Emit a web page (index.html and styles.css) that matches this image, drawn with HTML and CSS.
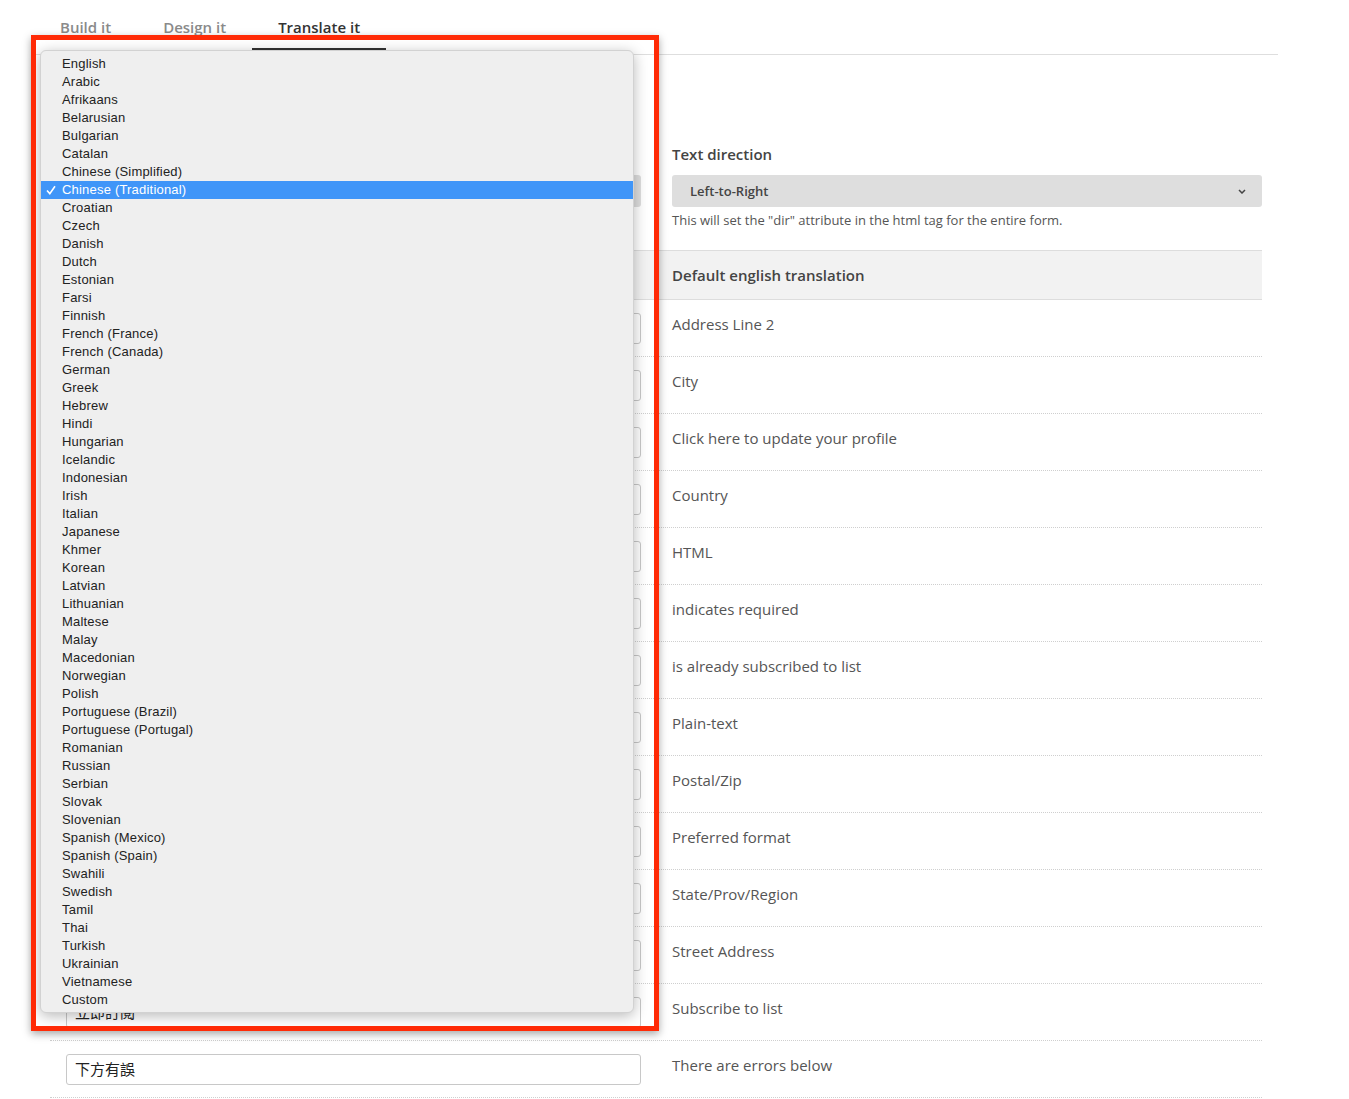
FILE: index.html
```html
<!DOCTYPE html>
<html lang="en">
<head>
<meta charset="utf-8">
<title>Translate it</title>
<link rel="stylesheet" href="styles.css">
</head>
<body>
<div class="page">
  <nav class="tabs">
    <a class="tab">Build it</a>
    <a class="tab">Design it</a>
    <a class="tab active">Translate it</a>
  </nav>

  <div class="form">
    <div class="settings">
      <div class="col col-left">
        <div class="label"></div>
        <div class="select select-left"></div>
      </div>
      <div class="col col-right">
        <div class="label">Text direction</div>
        <div class="select">
          <span>Left-to-Right</span>
          <svg class="chev" width="8" height="5" viewBox="0 0 8 5"><path d="M1 1 L4 4 L7 1" fill="none" stroke="#444" stroke-width="1.5"/></svg>
        </div>
        <div class="help">This will set the "dir" attribute in the html tag for the entire form.</div>
      </div>
    </div>

    <div class="table">
      <div class="row head">
        <div class="cell cell-left"></div>
        <div class="cell cell-right">Default english translation</div>
      </div>
      <div class="row"><div class="cell cell-left"><div class="input"></div></div><div class="cell cell-right">Address Line 2</div></div>
      <div class="row"><div class="cell cell-left"><div class="input"></div></div><div class="cell cell-right">City</div></div>
      <div class="row"><div class="cell cell-left"><div class="input"></div></div><div class="cell cell-right">Click here to update your profile</div></div>
      <div class="row"><div class="cell cell-left"><div class="input"></div></div><div class="cell cell-right">Country</div></div>
      <div class="row"><div class="cell cell-left"><div class="input"></div></div><div class="cell cell-right">HTML</div></div>
      <div class="row"><div class="cell cell-left"><div class="input"></div></div><div class="cell cell-right">indicates required</div></div>
      <div class="row"><div class="cell cell-left"><div class="input"></div></div><div class="cell cell-right">is already subscribed to list</div></div>
      <div class="row"><div class="cell cell-left"><div class="input"></div></div><div class="cell cell-right">Plain-text</div></div>
      <div class="row"><div class="cell cell-left"><div class="input"></div></div><div class="cell cell-right">Postal/Zip</div></div>
      <div class="row"><div class="cell cell-left"><div class="input"></div></div><div class="cell cell-right">Preferred format</div></div>
      <div class="row"><div class="cell cell-left"><div class="input"></div></div><div class="cell cell-right">State/Prov/Region</div></div>
      <div class="row"><div class="cell cell-left"><div class="input"></div></div><div class="cell cell-right">Street Address</div></div>
      <div class="row"><div class="cell cell-left"><div class="input">立即訂閱</div></div><div class="cell cell-right">Subscribe to list</div></div>
      <div class="row"><div class="cell cell-left"><div class="input">下方有誤</div></div><div class="cell cell-right">There are errors below</div></div>
    </div>
  </div>

  <ul class="dropdown">
    <li>English</li>
    <li>Arabic</li>
    <li>Afrikaans</li>
    <li>Belarusian</li>
    <li>Bulgarian</li>
    <li>Catalan</li>
    <li>Chinese (Simplified)</li>
    <li class="selected"><svg class="check" width="10" height="10" viewBox="0 0 10 10"><path d="M1 5.5 L3.8 8.6 L9 1.2" fill="none" stroke="#fff" stroke-width="1.6"/></svg>Chinese (Traditional)</li>
    <li>Croatian</li>
    <li>Czech</li>
    <li>Danish</li>
    <li>Dutch</li>
    <li>Estonian</li>
    <li>Farsi</li>
    <li>Finnish</li>
    <li>French (France)</li>
    <li>French (Canada)</li>
    <li>German</li>
    <li>Greek</li>
    <li>Hebrew</li>
    <li>Hindi</li>
    <li>Hungarian</li>
    <li>Icelandic</li>
    <li>Indonesian</li>
    <li>Irish</li>
    <li>Italian</li>
    <li>Japanese</li>
    <li>Khmer</li>
    <li>Korean</li>
    <li>Latvian</li>
    <li>Lithuanian</li>
    <li>Maltese</li>
    <li>Malay</li>
    <li>Macedonian</li>
    <li>Norwegian</li>
    <li>Polish</li>
    <li>Portuguese (Brazil)</li>
    <li>Portuguese (Portugal)</li>
    <li>Romanian</li>
    <li>Russian</li>
    <li>Serbian</li>
    <li>Slovak</li>
    <li>Slovenian</li>
    <li>Spanish (Mexico)</li>
    <li>Spanish (Spain)</li>
    <li>Swahili</li>
    <li>Swedish</li>
    <li>Tamil</li>
    <li>Thai</li>
    <li>Turkish</li>
    <li>Ukrainian</li>
    <li>Vietnamese</li>
    <li>Custom</li>
  </ul>

  <div class="frame"></div>
</div>
</body>
</html>
```

FILE: styles.css
```css
* { box-sizing: border-box; }

body {
  margin: 0;
  background: #fff;
  font-family: "Open Sans", "Noto Sans CJK TC", sans-serif;
  color: #444;
}

.page {
  position: relative;
  width: 1349px;
  min-height: 1099px;
}

/* Tabs */
.tabs {
  display: flex;
  margin-left: 34px;
  width: 1244px;
  padding-bottom: 3px;
  border-bottom: 1px solid #dedede;
}

.tab {
  padding: 17px 26px 11px;
  line-height: 20px;
  font-size: 15px;
  font-weight: 600;
  color: #8a8a8a;
  border-bottom: 3px solid transparent;
}

.tab.active {
  color: #333;
  border-bottom-color: #333;
}

/* Form */
.form {
  margin-left: 50px;
  width: 1212px;
}

.settings {
  display: grid;
  grid-template-columns: 606px 606px;
  padding-top: 89px;
  margin-bottom: 21px;
}

.col-left { padding: 0 15px 0 16px; }
.col-right { padding: 0 0 0 16px; }

.label {
  height: 20px;
  font-size: 15px;
  line-height: 20px;
  font-weight: 600;
  color: #444;
  margin-bottom: 11px;
}

.select {
  height: 32px;
  background: #dedede;
  border-radius: 3px;
  display: flex;
  align-items: center;
  justify-content: space-between;
  padding: 0 16px 0 18px;
  font-size: 13px;
  font-weight: 600;
  color: #444;
}

.help {
  margin-top: 4px;
  font-size: 13px;
  line-height: 18px;
  color: #555;
}

/* Table */
.table {
  border-top: 1px solid #dddddd;
}

.row {
  display: grid;
  grid-template-columns: 606px 606px;
  height: 57px;
  border-bottom: 1px dotted #cfcfcf;
}

.row.head {
  height: 49px;
  background: #f2f2f2;
  border-bottom: 1px solid #dddddd;
}

.head .cell {
  padding-top: 14px;
  font-weight: 600;
  color: #444;
}

.cell {
  font-size: 15px;
  line-height: 20px;
}

.cell-left { padding: 13px 15px 0 16px; }
.cell-right { padding: 14px 0 0 16px; color: #555; }

.input {
  height: 31px;
  border: 1px solid #c8c8c8;
  border-radius: 3px;
  padding: 0 8px;
  font-family: "Noto Sans CJK TC", "Open Sans", sans-serif;
  font-size: 15px;
  line-height: 28px;
  color: #222;
  background: #fff;
}

/* Native select popup (overlay) */
.dropdown {
  position: absolute;
  left: 40px;
  top: 50px;
  width: 594px;
  height: 963px;
  margin: 0;
  padding: 4px 0 3px;
  list-style: none;
  background: #efefef;
  border: 1px solid #d2d2d2;
  border-radius: 6px;
  box-shadow: 0 3px 14px rgba(0, 0, 0, 0.28);
  font-family: "Liberation Sans", Arial, sans-serif;
  font-size: 13px;
  letter-spacing: 0.2px;
  color: #222;
}

.dropdown li {
  position: relative;
  height: 18px;
  line-height: 18px;
  padding-left: 21px;
}

.dropdown li.selected {
  background: #3f95f8;
  color: #fff;
}

.check {
  position: absolute;
  left: 5px;
  top: 4px;
}

/* Red annotation frame */
.frame {
  position: absolute;
  left: 31px;
  top: 35px;
  width: 628px;
  height: 996px;
  border: 5px solid #ff2a06;
  box-shadow: 0 3px 8px rgba(0, 0, 0, 0.35);
  pointer-events: none;
}
```
